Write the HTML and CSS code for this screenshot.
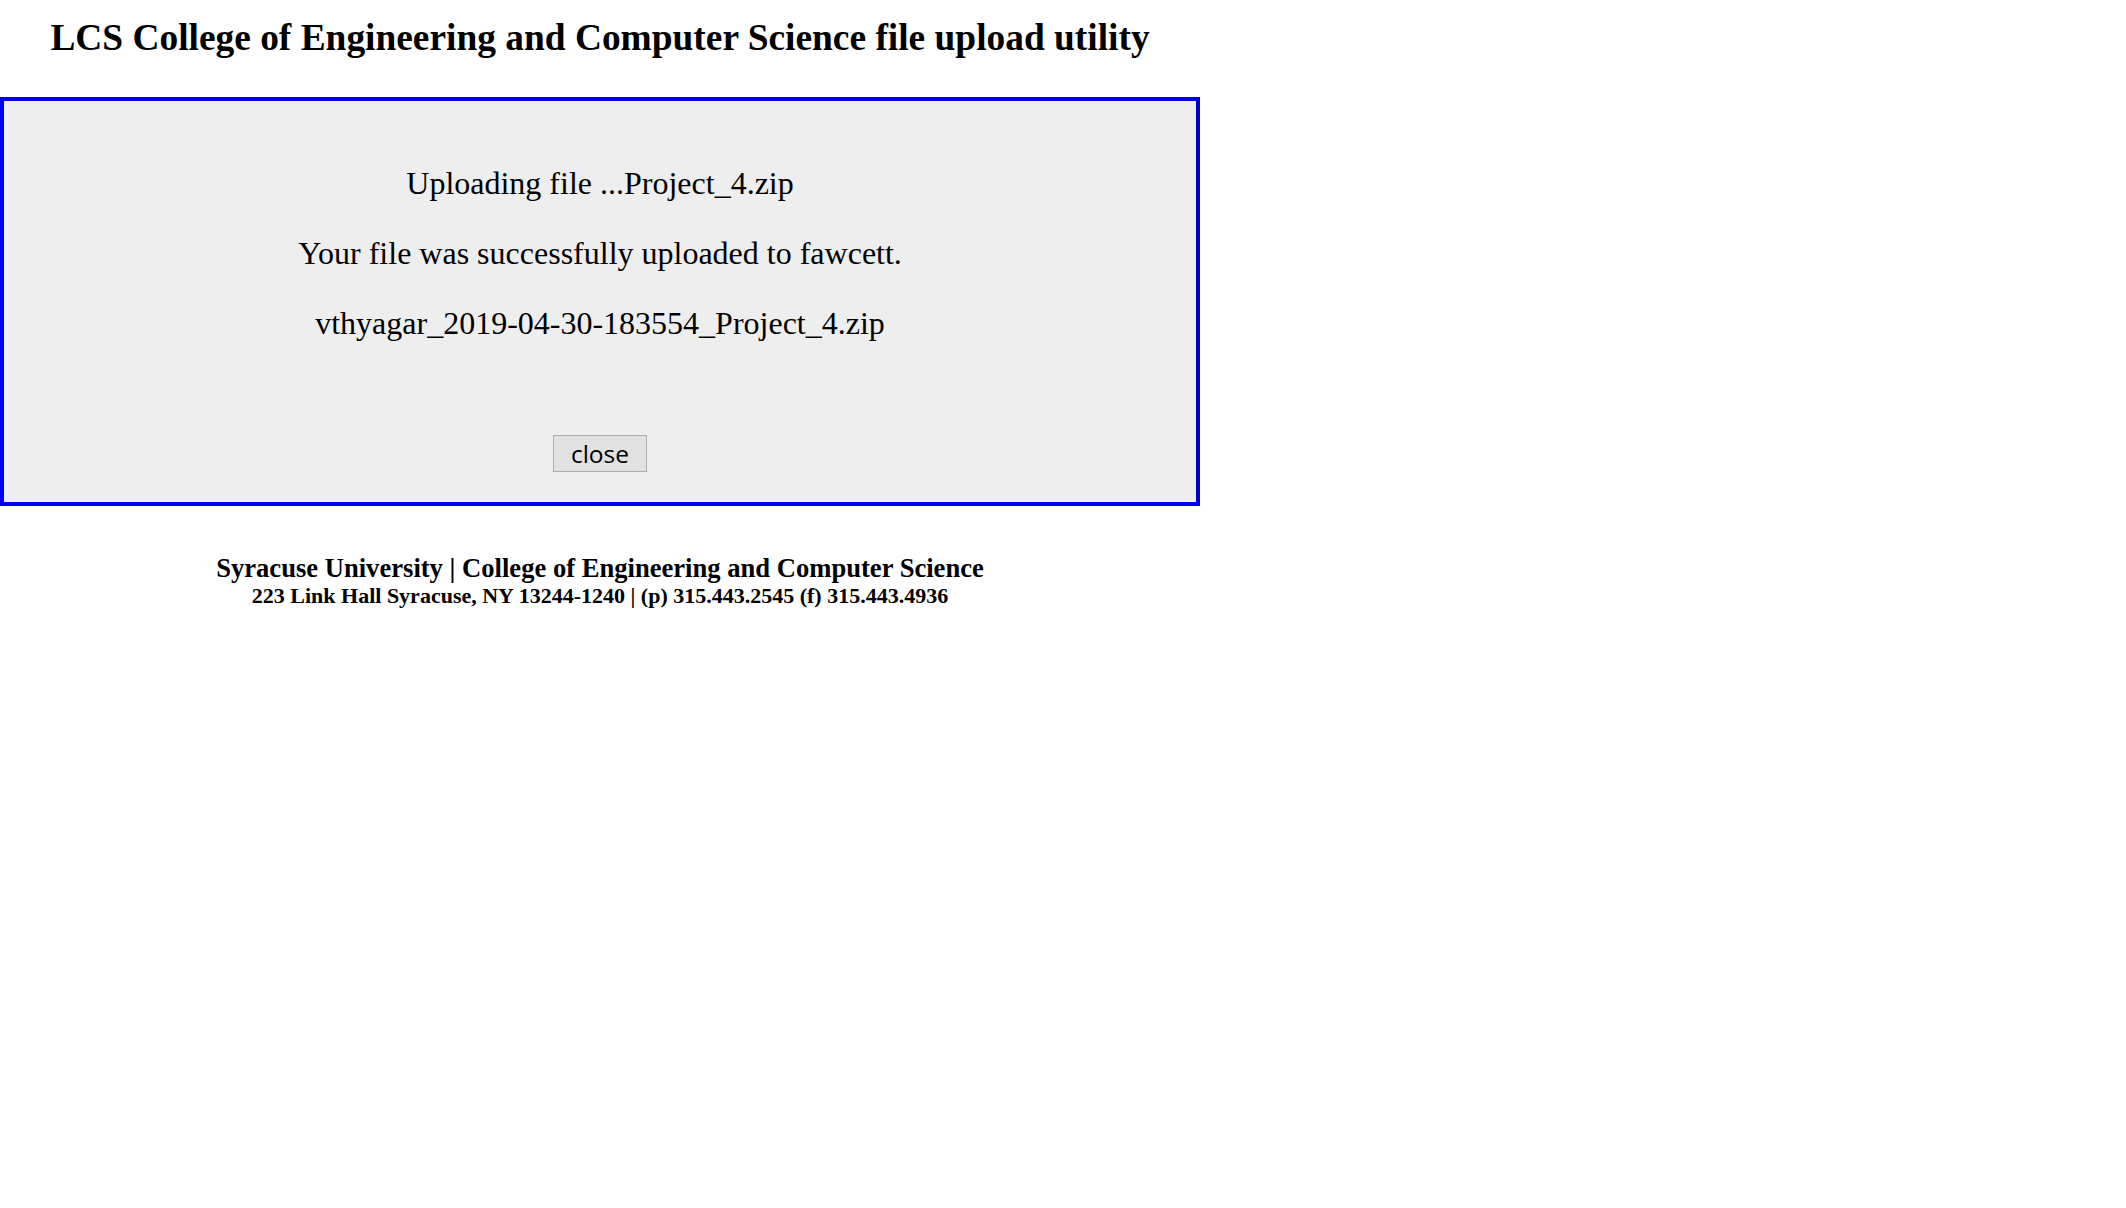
FILE: index.html
```html
<!DOCTYPE html>
<html>
<head>
<meta charset="utf-8">
<title>LCS file upload utility</title>
<link rel="stylesheet" href="styles.css">
</head>
<body>
<div class="page">
  <h1 class="title">LCS College of Engineering and Computer Science file upload utility</h1>
  <div class="panel">
    <p class="msg msg-first">Uploading file ...Project_4.zip</p>
    <p class="msg">Your file was successfully uploaded to fawcett.</p>
    <p class="msg">vthyagar_2019-04-30-183554_Project_4.zip</p>
    <div class="actions"><button class="close-btn" type="button">close</button></div>
  </div>
  <div class="footer">
    <div class="footer-main">Syracuse University | College of Engineering and Computer Science</div>
    <div class="footer-sub">223 Link Hall Syracuse, NY 13244-1240 | (p) 315.443.2545 (f) 315.443.4936</div>
  </div>
</div>
</body>
</html>
```

FILE: styles.css
```css
html, body {
  margin: 0;
  padding: 0;
  background: #ffffff;
}
body {
  font-family: "Liberation Serif", "Times New Roman", serif;
  color: #000;
}
.page {
  width: 1200px;
  text-align: center;
}
.title {
  font-size: 37.4px;
  line-height: 40px;
  font-weight: bold;
  margin: 18px 0 39px;
}
.panel {
  background: #eeeeee;
  border: 4px solid #0000ee;
  border-right-color: #0000c4;
  padding: 65px 0 30px;
}
.msg {
  font-size: 32px;
  line-height: 34px;
  margin: 0 0 36px;
}
.msg-first {
  margin-top: 0;
}
.actions {
  margin-top: 95px;
  display: flex;
  justify-content: center;
}
.close-btn {
  width: 94px;
  height: 37px;
  padding: 0;
  border: 1px solid #adadad;
  background: #e1e1e1;
  font-family: "Open Sans", "Noto Sans", sans-serif;
  font-size: 24.5px;
  color: #000;
  line-height: 35px;
}
.footer {
  margin-top: 47px;
  font-weight: bold;
}
.footer-main {
  font-size: 26.6px;
  line-height: 30px;
}
.footer-sub {
  font-size: 22px;
  line-height: 26px;
}
```
